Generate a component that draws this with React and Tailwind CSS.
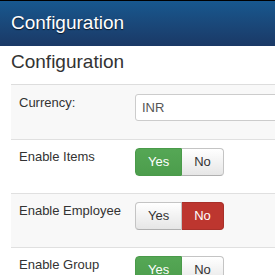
import React from "react";

const rows = [
  { label: "Enable Items", value: true },
  { label: "Enable Employee", value: false },
  { label: "Enable Group", value: true },
];

const Toggle = ({ value }) => (
  <div className="flex shrink-0">
    <span
      className={
        value
          ? "h-[28px] px-[12px] leading-[18px] py-[4px] rounded-l-[4px] border border-[#4a9a4a] bg-gradient-to-b from-[#55a755] to-[#4c9d4c] text-white"
          : "h-[28px] px-[12px] leading-[18px] py-[4px] rounded-l-[4px] border border-[#c4c4c4] border-b-[#b0b0b0] bg-gradient-to-b from-white to-[#e6e6e6] text-[#333]"
      }
    >
      Yes
    </span>
    <span
      className={
        value
          ? "h-[28px] px-[12px] leading-[18px] py-[4px] rounded-r-[4px] border border-l-0 border-[#c4c4c4] border-b-[#b0b0b0] bg-gradient-to-b from-white to-[#e6e6e6] text-[#333]"
          : "h-[28px] px-[12px] leading-[18px] py-[4px] rounded-r-[4px] border border-l-0 border-[#a8302a] bg-[#bd362f] text-white"
      }
    >
      No
    </span>
  </div>
);

export default function App() {
  return (
    <div className="w-[275px] h-[275px] overflow-hidden bg-white font-['Liberation_Sans',Arial,sans-serif] text-[13px] text-[#333]">
      {/* Header */}
      <div className="h-[46px] border-t border-black bg-gradient-to-b from-[#17588f] to-[#1a3966] pl-[11px] flex items-center">
        <h1 className="text-[19px] text-white [text-shadow:0_1px_1px_rgba(0,0,0,0.7)]">
          Configuration
        </h1>
      </div>

      <div className="ml-[11px]">
        <h2 className="mt-[4px] text-[19px] leading-[24px] pb-[10px] border-b border-[#dddddd]">
          Configuration
        </h2>

        {/* Currency */}
        <div className="h-[55px] border-b border-[#e0e0e0] bg-[#f8f8f8] pl-[8px] pt-[9px] flex">
          <label className="w-[116px] shrink-0 leading-[18px]">Currency:</label>
          <div className="w-[220px] shrink-0 h-[27px] border border-[#cccccc] rounded-[3px] bg-white pl-[6px] leading-[25px] text-[#555]">
            INR
          </div>
        </div>

        {rows.map((row, i) => (
          <div
            key={row.label}
            className={
              i % 2 === 1
                ? "h-[54px] border-b border-[#e0e0e0] bg-[#f8f8f8] pl-[8px] pt-[8px] flex"
                : "h-[54px] border-b border-[#e0e0e0] bg-white pl-[8px] pt-[8px] flex"
            }
          >
            <label className="w-[116px] shrink-0 leading-[18px]">{row.label}</label>
            <Toggle value={row.value} />
          </div>
        ))}
      </div>
    </div>
  );
}
